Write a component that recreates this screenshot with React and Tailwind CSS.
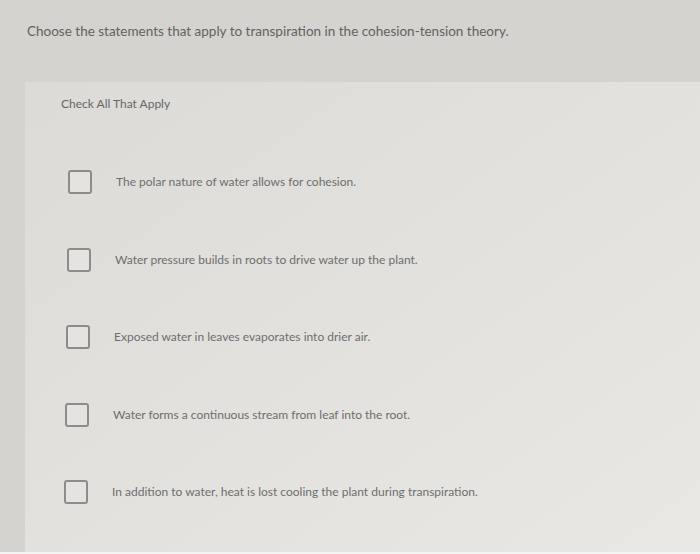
import React from 'react';

// rows drift a little to the left toward the bottom, like in the photo
const options = [
  { text: "The polar nature of water allows for cohesion.", pad: "pl-[43px]" },
  { text: "Water pressure builds in roots to drive water up the plant.", pad: "pl-[42px]" },
  { text: "Exposed water in leaves evaporates into drier air.", pad: "pl-[41px]" },
  { text: "Water forms a continuous stream from leaf into the root.", pad: "pl-[40px]" },
  { text: "In addition to water, heat is lost cooling the plant during transpiration.", pad: "pl-[39px]" },
];

const App = () => {
  return (
    <div
      className="w-[700px] h-[554px] overflow-hidden bg-[#d5d3d0] text-[#626262] flex flex-col"
      style={{ fontFamily: 'Lato, "Open Sans", sans-serif' }}
    >
      <div className="h-[82px] pl-[27px] pt-[22px]">
        <p className="text-[13.5px] leading-[18px]">
          Choose the statements that apply to transpiration in the cohesion-tension theory.
        </p>
      </div>

      <div className="ml-[25px] flex-1 bg-gradient-to-br from-[#dcdbd8] via-[#e2e1de] to-[#e9e8e4] pt-[14px]">
        <p className="pl-[36px] text-[12px] leading-[16px] text-[#676767]">Check All That Apply</p>

        <div className="mt-[58px] flex flex-col gap-[53.5px] pr-[10px]">
          {options.map((o, i) => (
            <label key={i} className={`flex items-center h-[24px] cursor-pointer ${o.pad}`}>
              <span className="w-[24px] h-[24px] shrink-0 rounded-[3px] border-2 border-[#8c8c8c] bg-[#e4e3e0]" />
              <span className="ml-[24px] text-[12px] leading-[14px] text-[#6e6e6e]">{o.text}</span>
            </label>
          ))}
        </div>
      </div>
      <div className="h-[2px] bg-[#f4f4f2]" />
    </div>
  );
};

export default App;
